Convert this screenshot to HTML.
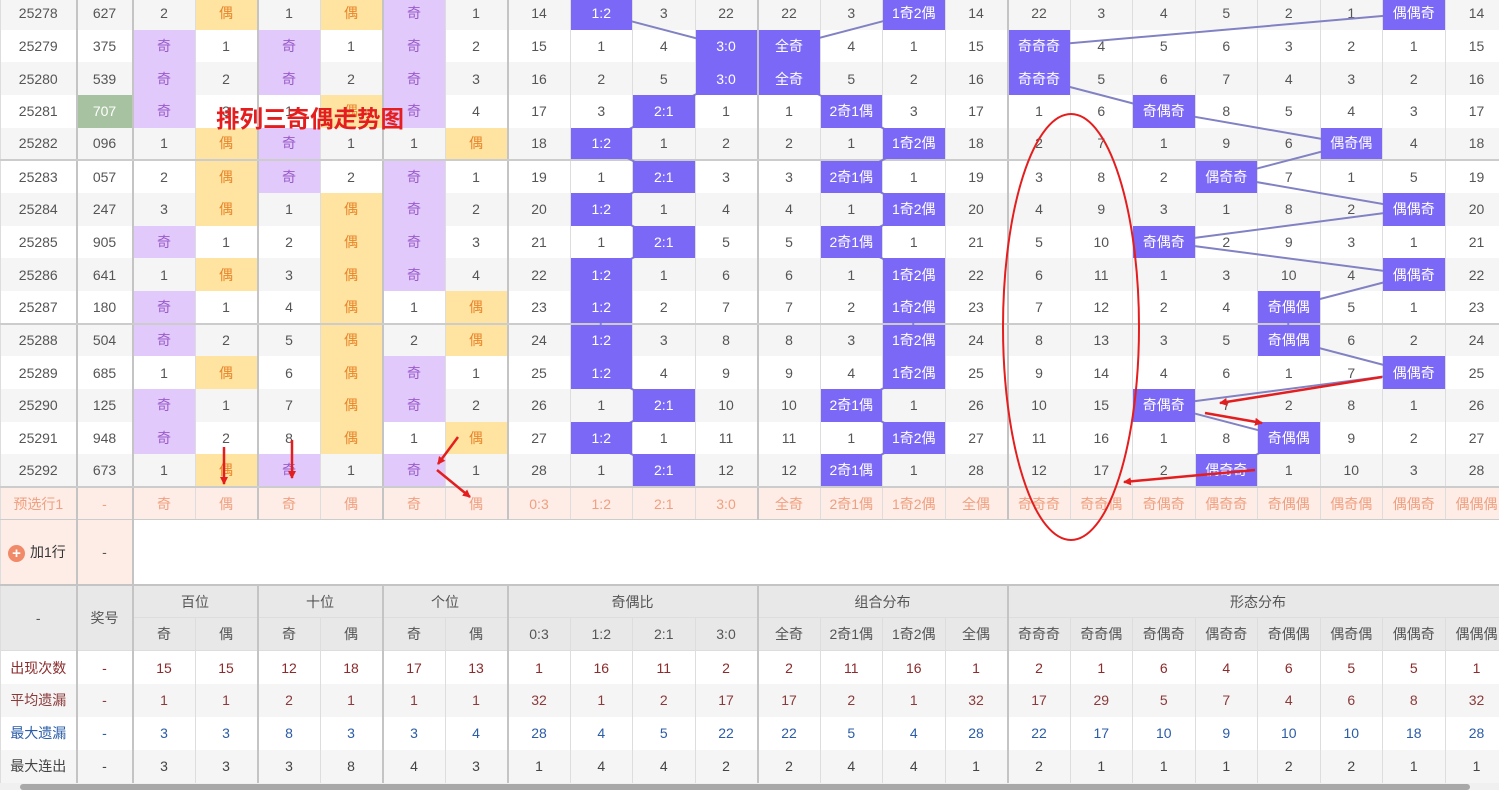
<!DOCTYPE html>
<html><head><meta charset="utf-8">
<style>
*{margin:0;padding:0;box-sizing:border-box}
body{width:1499px;height:790px;overflow:hidden;background:#fff;position:relative;font-family:"Liberation Sans","Noto Sans CJK SC",sans-serif;font-size:14px;color:#555}
#wrap{position:absolute;left:0;top:-3px;width:1499px;height:793px;overflow:hidden}
table{border-collapse:collapse;table-layout:fixed;width:1507px}
td{text-align:center;padding:0;border-left:1px solid #ddd;white-space:nowrap;overflow:hidden}
tr.d td{height:32.67px}
tr.e td{background:#f5f5f5}
tr.o td{background:#fff}
td.L{border-left:2px solid #c4c4c4}
tr.s td{border-bottom:2px solid #ccc}
td.p{background:#e2c9fb!important;color:#9b5bc9}
td.y{background:#ffe3a1!important;color:#e8852a}
td.h{background:#7b68f7!important;color:#fff;position:relative;z-index:2}
td.g{background:#a7c2a0!important;color:#fff}
tr.pre td{background:#fdede6;color:#f0a080;height:33px;border-bottom:1px solid #ccc}
tr.add td{height:65px;border-bottom:2px solid #c4c4c4}
tr.hd td{background:#e8e8e8;color:#555;height:33px;border-bottom:1px solid #ddd}
tr.st td{height:33px}
tr.st1 td{color:#8b2b2b}
tr.st2 td{color:#8b3a3a;background:#f5f5f5}
tr.st3 td{color:#2b5ca8}
tr.st4 td{color:#444;background:#f5f5f5}
td.plus{color:#333;text-align:left;padding-left:7px}
.pc{display:inline-block;width:17px;height:17px;border-radius:50%;background:#f08a68;color:#fff;font-size:15px;line-height:17px;text-align:center;vertical-align:middle;margin-right:5px;font-weight:bold}
svg.ov{position:absolute;left:0;top:0;z-index:1}
svg.an{position:absolute;left:0;top:0;z-index:5}
.title{position:absolute;left:216px;top:100px;z-index:6;color:#e41e1e;font-size:23.5px;line-height:34px;font-weight:bold;font-family:"Noto Sans CJK SC",sans-serif}
.sb{position:absolute;left:0;top:783px;width:1499px;height:7px;background:#f0f0f0;z-index:7}
.sb div{position:absolute;left:20px;top:1px;width:1450px;height:6px;background:#a8a8a8;border-radius:3px}
</style></head><body>
<div id="wrap">
<svg class="ov" width="1507" height="520"><g fill="none" stroke="#8181c4" stroke-width="2">
<polyline points="600.75,16.3 725.75,49 725.75,81.7 663.25,114.3 600.75,147 663.25,179.7 600.75,212.3 663.25,245 600.75,277.7 600.75,310.3 600.75,343 600.75,375.7 663.25,408.3 600.75,441 663.25,473.7"/>
<polyline points="913.25,16.3 788.25,49 788.25,81.7 850.75,114.3 913.25,147 850.75,179.7 913.25,212.3 850.75,245 913.25,277.7 913.25,310.3 913.25,343 913.25,375.7 850.75,408.3 913.25,441 850.75,473.7"/>
<polyline points="1413.25,16.3 1038.25,49 1038.25,81.7 1163.25,114.3 1350.75,147 1225.75,179.7 1413.25,212.3 1163.25,245 1413.25,277.7 1288.25,310.3 1288.25,343 1413.25,375.7 1163.25,408.3 1288.25,441 1225.75,473.7"/>
</g></svg>
<table>
<colgroup><col style="width:76px"><col style="width:56px"><col span="22" style="width:62.5px"></colgroup>
<tr class="d e"><td>25278</td><td class="L">627</td><td class="L">2</td><td class="y">偶</td><td class="L">1</td><td class="y">偶</td><td class="L p">奇</td><td>1</td><td class="L">14</td><td class="h">1:2</td><td>3</td><td>22</td><td class="L">22</td><td>3</td><td class="h">1奇2偶</td><td>14</td><td class="L">22</td><td>3</td><td>4</td><td>5</td><td>2</td><td>1</td><td class="h">偶偶奇</td><td>14</td></tr>
<tr class="d o"><td>25279</td><td class="L">375</td><td class="L p">奇</td><td>1</td><td class="L p">奇</td><td>1</td><td class="L p">奇</td><td>2</td><td class="L">15</td><td>1</td><td>4</td><td class="h">3:0</td><td class="L h">全奇</td><td>4</td><td>1</td><td>15</td><td class="L h">奇奇奇</td><td>4</td><td>5</td><td>6</td><td>3</td><td>2</td><td>1</td><td>15</td></tr>
<tr class="d e"><td>25280</td><td class="L">539</td><td class="L p">奇</td><td>2</td><td class="L p">奇</td><td>2</td><td class="L p">奇</td><td>3</td><td class="L">16</td><td>2</td><td>5</td><td class="h">3:0</td><td class="L h">全奇</td><td>5</td><td>2</td><td>16</td><td class="L h">奇奇奇</td><td>5</td><td>6</td><td>7</td><td>4</td><td>3</td><td>2</td><td>16</td></tr>
<tr class="d o"><td>25281</td><td class="L g">707</td><td class="L p">奇</td><td>3</td><td class="L">1</td><td class="y">偶</td><td class="L p">奇</td><td>4</td><td class="L">17</td><td>3</td><td class="h">2:1</td><td>1</td><td class="L">1</td><td class="h">2奇1偶</td><td>3</td><td>17</td><td class="L">1</td><td>6</td><td class="h">奇偶奇</td><td>8</td><td>5</td><td>4</td><td>3</td><td>17</td></tr>
<tr class="d e s"><td>25282</td><td class="L">096</td><td class="L">1</td><td class="y">偶</td><td class="L p">奇</td><td>1</td><td class="L">1</td><td class="y">偶</td><td class="L">18</td><td class="h">1:2</td><td>1</td><td>2</td><td class="L">2</td><td>1</td><td class="h">1奇2偶</td><td>18</td><td class="L">2</td><td>7</td><td>1</td><td>9</td><td>6</td><td class="h">偶奇偶</td><td>4</td><td>18</td></tr>
<tr class="d o"><td>25283</td><td class="L">057</td><td class="L">2</td><td class="y">偶</td><td class="L p">奇</td><td>2</td><td class="L p">奇</td><td>1</td><td class="L">19</td><td>1</td><td class="h">2:1</td><td>3</td><td class="L">3</td><td class="h">2奇1偶</td><td>1</td><td>19</td><td class="L">3</td><td>8</td><td>2</td><td class="h">偶奇奇</td><td>7</td><td>1</td><td>5</td><td>19</td></tr>
<tr class="d e"><td>25284</td><td class="L">247</td><td class="L">3</td><td class="y">偶</td><td class="L">1</td><td class="y">偶</td><td class="L p">奇</td><td>2</td><td class="L">20</td><td class="h">1:2</td><td>1</td><td>4</td><td class="L">4</td><td>1</td><td class="h">1奇2偶</td><td>20</td><td class="L">4</td><td>9</td><td>3</td><td>1</td><td>8</td><td>2</td><td class="h">偶偶奇</td><td>20</td></tr>
<tr class="d o"><td>25285</td><td class="L">905</td><td class="L p">奇</td><td>1</td><td class="L">2</td><td class="y">偶</td><td class="L p">奇</td><td>3</td><td class="L">21</td><td>1</td><td class="h">2:1</td><td>5</td><td class="L">5</td><td class="h">2奇1偶</td><td>1</td><td>21</td><td class="L">5</td><td>10</td><td class="h">奇偶奇</td><td>2</td><td>9</td><td>3</td><td>1</td><td>21</td></tr>
<tr class="d e"><td>25286</td><td class="L">641</td><td class="L">1</td><td class="y">偶</td><td class="L">3</td><td class="y">偶</td><td class="L p">奇</td><td>4</td><td class="L">22</td><td class="h">1:2</td><td>1</td><td>6</td><td class="L">6</td><td>1</td><td class="h">1奇2偶</td><td>22</td><td class="L">6</td><td>11</td><td>1</td><td>3</td><td>10</td><td>4</td><td class="h">偶偶奇</td><td>22</td></tr>
<tr class="d o s"><td>25287</td><td class="L">180</td><td class="L p">奇</td><td>1</td><td class="L">4</td><td class="y">偶</td><td class="L">1</td><td class="y">偶</td><td class="L">23</td><td class="h">1:2</td><td>2</td><td>7</td><td class="L">7</td><td>2</td><td class="h">1奇2偶</td><td>23</td><td class="L">7</td><td>12</td><td>2</td><td>4</td><td class="h">奇偶偶</td><td>5</td><td>1</td><td>23</td></tr>
<tr class="d e"><td>25288</td><td class="L">504</td><td class="L p">奇</td><td>2</td><td class="L">5</td><td class="y">偶</td><td class="L">2</td><td class="y">偶</td><td class="L">24</td><td class="h">1:2</td><td>3</td><td>8</td><td class="L">8</td><td>3</td><td class="h">1奇2偶</td><td>24</td><td class="L">8</td><td>13</td><td>3</td><td>5</td><td class="h">奇偶偶</td><td>6</td><td>2</td><td>24</td></tr>
<tr class="d o"><td>25289</td><td class="L">685</td><td class="L">1</td><td class="y">偶</td><td class="L">6</td><td class="y">偶</td><td class="L p">奇</td><td>1</td><td class="L">25</td><td class="h">1:2</td><td>4</td><td>9</td><td class="L">9</td><td>4</td><td class="h">1奇2偶</td><td>25</td><td class="L">9</td><td>14</td><td>4</td><td>6</td><td>1</td><td>7</td><td class="h">偶偶奇</td><td>25</td></tr>
<tr class="d e"><td>25290</td><td class="L">125</td><td class="L p">奇</td><td>1</td><td class="L">7</td><td class="y">偶</td><td class="L p">奇</td><td>2</td><td class="L">26</td><td>1</td><td class="h">2:1</td><td>10</td><td class="L">10</td><td class="h">2奇1偶</td><td>1</td><td>26</td><td class="L">10</td><td>15</td><td class="h">奇偶奇</td><td>7</td><td>2</td><td>8</td><td>1</td><td>26</td></tr>
<tr class="d o"><td>25291</td><td class="L">948</td><td class="L p">奇</td><td>2</td><td class="L">8</td><td class="y">偶</td><td class="L">1</td><td class="y">偶</td><td class="L">27</td><td class="h">1:2</td><td>1</td><td>11</td><td class="L">11</td><td>1</td><td class="h">1奇2偶</td><td>27</td><td class="L">11</td><td>16</td><td>1</td><td>8</td><td class="h">奇偶偶</td><td>9</td><td>2</td><td>27</td></tr>
<tr class="d e s"><td>25292</td><td class="L">673</td><td class="L">1</td><td class="y">偶</td><td class="L p">奇</td><td>1</td><td class="L p">奇</td><td>1</td><td class="L">28</td><td>1</td><td class="h">2:1</td><td>12</td><td class="L">12</td><td class="h">2奇1偶</td><td>1</td><td>28</td><td class="L">12</td><td>17</td><td>2</td><td class="h">偶奇奇</td><td>1</td><td>10</td><td>3</td><td>28</td></tr>
<tr class="pre"><td>预选行1</td><td class="L">-</td><td class="L">奇</td><td>偶</td><td class="L">奇</td><td>偶</td><td class="L">奇</td><td>偶</td><td class="L">0:3</td><td>1:2</td><td>2:1</td><td>3:0</td><td class="L">全奇</td><td>2奇1偶</td><td>1奇2偶</td><td>全偶</td><td class="L">奇奇奇</td><td>奇奇偶</td><td>奇偶奇</td><td>偶奇奇</td><td>奇偶偶</td><td>偶奇偶</td><td>偶偶奇</td><td>偶偶偶</td></tr>
<tr class="add"><td class="plus" style="background:#fdede6"><span class="pc">+</span>加1行</td><td class="L" style="background:#fdede6">-</td><td class="L" colspan="22"></td></tr>
<tr class="hd"><td rowspan="2">-</td><td class="L" rowspan="2">奖号</td><td class="L" colspan="2">百位</td><td class="L" colspan="2">十位</td><td class="L" colspan="2">个位</td><td class="L" colspan="4">奇偶比</td><td class="L" colspan="4">组合分布</td><td class="L" colspan="8">形态分布</td></tr>
<tr class="hd"><td class="L">奇</td><td>偶</td><td class="L">奇</td><td>偶</td><td class="L">奇</td><td>偶</td><td class="L">0:3</td><td>1:2</td><td>2:1</td><td>3:0</td><td class="L">全奇</td><td>2奇1偶</td><td>1奇2偶</td><td>全偶</td><td class="L">奇奇奇</td><td>奇奇偶</td><td>奇偶奇</td><td>偶奇奇</td><td>奇偶偶</td><td>偶奇偶</td><td>偶偶奇</td><td>偶偶偶</td></tr>
<tr class="st st1"><td>出现次数</td><td class="L">-</td><td class="L">15</td><td>15</td><td class="L">12</td><td>18</td><td class="L">17</td><td>13</td><td class="L">1</td><td>16</td><td>11</td><td>2</td><td class="L">2</td><td>11</td><td>16</td><td>1</td><td class="L">2</td><td>1</td><td>6</td><td>4</td><td>6</td><td>5</td><td>5</td><td>1</td></tr>
<tr class="st st2"><td>平均遗漏</td><td class="L">-</td><td class="L">1</td><td>1</td><td class="L">2</td><td>1</td><td class="L">1</td><td>1</td><td class="L">32</td><td>1</td><td>2</td><td>17</td><td class="L">17</td><td>2</td><td>1</td><td>32</td><td class="L">17</td><td>29</td><td>5</td><td>7</td><td>4</td><td>6</td><td>8</td><td>32</td></tr>
<tr class="st st3"><td>最大遗漏</td><td class="L">-</td><td class="L">3</td><td>3</td><td class="L">8</td><td>3</td><td class="L">3</td><td>4</td><td class="L">28</td><td>4</td><td>5</td><td>22</td><td class="L">22</td><td>5</td><td>4</td><td>28</td><td class="L">22</td><td>17</td><td>10</td><td>9</td><td>10</td><td>10</td><td>18</td><td>28</td></tr>
<tr class="st st4"><td>最大连出</td><td class="L">-</td><td class="L">3</td><td>3</td><td class="L">3</td><td>8</td><td class="L">4</td><td>3</td><td class="L">1</td><td>4</td><td>4</td><td>2</td><td class="L">2</td><td>4</td><td>4</td><td>1</td><td class="L">2</td><td>1</td><td>1</td><td>1</td><td>2</td><td>2</td><td>1</td><td>1</td></tr>
</table>
</div>
<div class="title">排列三奇偶走势图</div>
<svg class="an" width="1499" height="790">
<defs><marker id="ar" markerWidth="8" markerHeight="8" refX="7" refY="4" orient="auto" markerUnits="userSpaceOnUse"><path d="M0,0 L8,4 L0,8 Z" fill="#e41e1e"/></marker></defs>
<g stroke="#e41e1e" stroke-width="2.5" fill="none">
<ellipse cx="1071" cy="327" rx="68" ry="213" stroke-width="2"/>
<line x1="224" y1="447" x2="224" y2="484" marker-end="url(#ar)"/>
<line x1="292" y1="440" x2="292" y2="478" marker-end="url(#ar)"/>
<line x1="458" y1="437" x2="438" y2="464" marker-end="url(#ar)"/>
<line x1="437" y1="470" x2="470" y2="497" marker-end="url(#ar)"/>
<line x1="1382" y1="377" x2="1220" y2="403" marker-end="url(#ar)"/>
<line x1="1205" y1="413" x2="1262" y2="423" marker-end="url(#ar)"/>
<line x1="1255" y1="470" x2="1124" y2="482" marker-end="url(#ar)"/>
</g></svg>
<div class="sb"><div></div></div>
</body></html>
